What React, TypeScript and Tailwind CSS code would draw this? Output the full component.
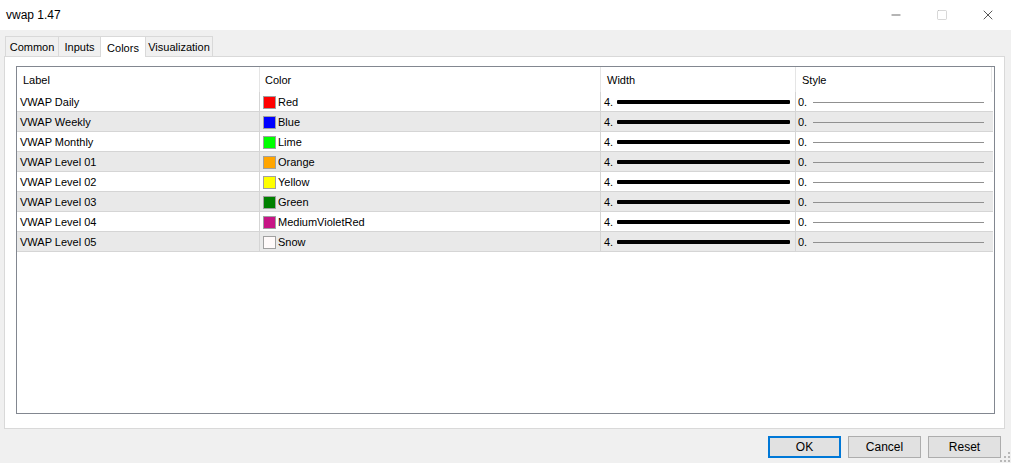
import { X, Minus, Square } from "lucide-react";

const rows = [
  { label: "VWAP Daily", name: "Red", color: "bg-[#ff0000]" },
  { label: "VWAP Weekly", name: "Blue", color: "bg-[#0000ff]" },
  { label: "VWAP Monthly", name: "Lime", color: "bg-[#00ff00]" },
  { label: "VWAP Level 01", name: "Orange", color: "bg-[#ffa500]" },
  { label: "VWAP Level 02", name: "Yellow", color: "bg-[#ffff00]" },
  { label: "VWAP Level 03", name: "Green", color: "bg-[#008000]" },
  { label: "VWAP Level 04", name: "MediumVioletRed", color: "bg-[#c71585]" },
  { label: "VWAP Level 05", name: "Snow", color: "bg-[#fffafa]" },
];

const tabs = [
  { name: "Common", w: "w-[54px]" },
  { name: "Inputs", w: "w-[43px]" },
  { name: "Colors", w: "w-[46px]" },
  { name: "Visualization", w: "w-[68px]" },
];

const App = () => {
  return (
    <div className="w-[1011px] h-[463px] bg-[#f0f0f0] flex flex-col text-black font-['Liberation_Sans',Arial,sans-serif] overflow-hidden">
      {/* Title bar */}
      <div className="h-[30px] bg-white flex items-center shrink-0">
        <p className="pl-[6px] text-[12px] flex-1">vwap 1.47</p>
        <div className="w-[46px] h-[30px] flex items-center justify-center">
          <Minus size={14} strokeWidth={1} className="text-black" />
        </div>
        <div className="w-[46px] h-[30px] flex items-center justify-center">
          <Square size={12} strokeWidth={1} className="text-[#b0b0b0]" />
        </div>
        <div className="w-[46px] h-[30px] flex items-center justify-center">
          <X size={16} strokeWidth={1} className="text-black" />
        </div>
      </div>

      {/* Tabs */}
      <div className="flex items-end pl-[5px] pt-[6px] h-[26px] shrink-0">
        {tabs.map((t) => (
          <div
            key={t.name}
            className={
              t.name === "Colors"
                ? `${t.w} h-[21px] -ml-px bg-white border border-b-0 border-[#d9d9d9] text-[11px] flex justify-center items-start pt-[3px] -mb-px relative z-10`
                : `${t.w} h-[20px] bg-[#f0f0f0] border border-b-0 border-[#d9d9d9] -ml-px first:ml-0 text-[11px] flex justify-center items-center pt-[2px]`
            }
          >
            {t.name}
          </div>
        ))}
      </div>

      {/* Panel */}
      <div className="mx-[4px] w-[1001px] h-[373px] bg-white border border-[#d9d9d9] pl-[11px] pr-[9px] pt-[9px] pb-[14px] flex flex-col">
        <div className="flex-1 border border-[#828790] bg-white flex flex-col text-[11px]">
          {/* Header */}
          <div className="flex h-[25px] w-[976px] items-center">
            <div className="w-[243px] h-full flex items-center pl-[6px] pt-px border-r border-[#e5e5e5]">Label</div>
            <div className="w-[341px] h-full flex items-center pl-[5px] pt-px border-r border-[#e5e5e5]">Color</div>
            <div className="w-[195px] h-full flex items-center pl-[6px] pt-px border-r border-[#e5e5e5]">Width</div>
            <div className="w-[196px] h-full flex items-center pl-[6px] pt-px border-r border-[#e5e5e5]">Style</div>
          </div>
          {/* Rows */}
          {rows.map((r, i) => (
            <div
              key={r.label}
              className={`flex h-[20px] w-[976px] border-b border-[#d5d5d5] ${i % 2 === 1 ? "bg-[#e9e9e9]" : "bg-white"}`}
            >
              <div className="w-[243px] flex items-center pl-[3px] pt-px border-r border-[#d5d5d5]">{r.label}</div>
              <div className="w-[341px] flex items-center pl-[3px] pt-px border-r border-[#d5d5d5]">
                <span className={`w-[13px] h-[13px] border border-[#a0a0a0] mr-[2px] ${r.color}`} />
                {r.name}
              </div>
              <div className="w-[195px] flex items-center pl-[3px] pt-px border-r border-[#d5d5d5]">
                <span className="w-[13px]">4.</span>
                <span className="w-[173px] h-[4px] bg-black rounded-[1px]" />
              </div>
              <div className="w-[196px] flex items-center pl-[2px] pt-px">
                <span className="w-[15px]">0.</span>
                <span className="w-[171px] h-px bg-[#909090]" />
              </div>
            </div>
          ))}
        </div>
      </div>

      {/* Buttons */}
      <div className="flex justify-end gap-[7px] pr-[10px] pt-[7px] relative flex-1">
        <button className="w-[73px] h-[22px] bg-[#e1e1e1] border-2 border-[#0078d7] text-[12px] flex items-center justify-center">
          OK
        </button>
        <button className="w-[73px] h-[22px] bg-[#e1e1e1] border border-[#adadad] text-[12px] flex items-center justify-center">
          Cancel
        </button>
        <button className="w-[73px] h-[22px] bg-[#e1e1e1] border border-[#adadad] text-[12px] flex items-center justify-center">
          Reset
        </button>
        <svg className="absolute right-[1px] bottom-[1px]" width="10" height="10" viewBox="0 0 10 10">
          <rect x="8" y="0" width="2" height="2" fill="#b8b8b8" />
          <rect x="4" y="4" width="2" height="2" fill="#b8b8b8" />
          <rect x="8" y="4" width="2" height="2" fill="#b8b8b8" />
          <rect x="0" y="8" width="2" height="2" fill="#b8b8b8" />
          <rect x="4" y="8" width="2" height="2" fill="#b8b8b8" />
          <rect x="8" y="8" width="2" height="2" fill="#b8b8b8" />
        </svg>
      </div>
    </div>
  );
};

export default App;
